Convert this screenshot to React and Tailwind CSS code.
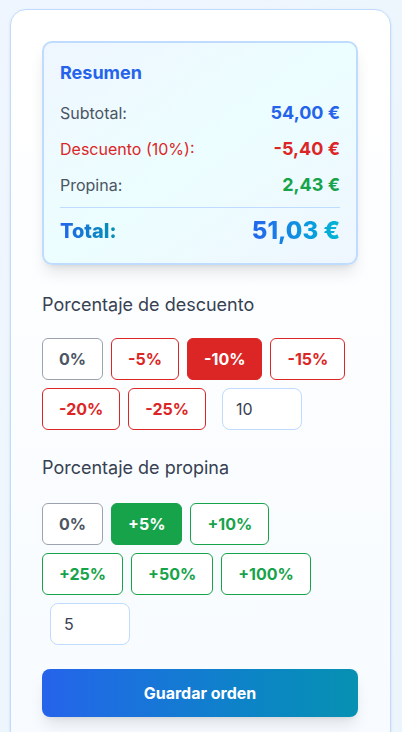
import React, { useState } from 'react';

const descuentos = [0, 5, 10, 15, 20, 25];
const propinas = [0, 5, 10, 25, 50, 100];

const fmt = (n) => n.toFixed(2).replace('.', ',') + ' €';

const App = () => {
  const subtotal = 54;
  const [descuento, setDescuento] = useState(10);
  const [propina, setPropina] = useState(5);

  const montoDescuento = (subtotal * descuento) / 100;
  const montoPropina = ((subtotal - montoDescuento) * propina) / 100;
  const total = subtotal - montoDescuento + montoPropina;

  const btnClass = (value, active, tipo) => {
    if (value === 0) {
      return active
        ? 'bg-[#4b5563] border-[#4b5563] text-white'
        : 'border-[#9ca3af] text-[#4b5563] bg-white';
    }
    if (tipo === 'descuento') {
      return active
        ? 'bg-[#dc2626] border-[#dc2626] text-white'
        : 'border-[#dc2626] text-[#dc2626] bg-white';
    }
    return active
      ? 'bg-[#16a34a] border-[#16a34a] text-white'
      : 'border-[#16a34a] text-[#16a34a] bg-white';
  };

  return (
    <div className="min-h-screen bg-gradient-to-br from-[#eff6ff] to-[#ecf5fb] pl-[10px] pt-[9px] font-['Inter',sans-serif]">
      <div className="w-[381px] rounded-2xl border border-[#bfdbfe] bg-gradient-to-b from-white to-[#f7fbff] pl-[31px] pr-[32px] pt-[31px] pb-10 shadow-sm">
        {/* Resumen */}
        <div className="rounded-[10px] border-2 border-[#bfdbfe] bg-gradient-to-br from-[#eff6ff] via-[#ecfeff] to-[#eff6ff] px-4 pt-4 pb-4 shadow-lg">
          <h3 className="text-lg font-bold text-[#2563eb] leading-7">Resumen</h3>
          <div className="mt-3 flex flex-col gap-[8px] text-base leading-7">
            <div className="flex justify-between">
              <span className="text-[#4b5563]">Subtotal:</span>
              <span className="font-bold text-[#2563eb] text-lg">{fmt(subtotal)}</span>
            </div>
            <div className="flex justify-between">
              <span className="text-[#dc2626]">Descuento ({descuento}%):</span>
              <span className="font-bold text-[#dc2626] text-lg">-{fmt(montoDescuento)}</span>
            </div>
            <div className="flex justify-between">
              <span className="text-[#4b5563]">Propina:</span>
              <span className="font-bold text-[#16a34a] text-lg">{fmt(montoPropina)}</span>
            </div>
          </div>
          <div className="mt-[8px] border-t border-[#bfdbfe] pt-[7px] flex items-center justify-between leading-8">
            <span className="text-xl font-extrabold bg-gradient-to-r from-[#2563eb] to-[#0891b2] bg-clip-text text-transparent">
              Total:
            </span>
            <span className="text-2xl font-extrabold bg-gradient-to-r from-[#2563eb] to-[#06b6d4] bg-clip-text text-transparent">
              {fmt(total)}
            </span>
          </div>
        </div>

        {/* Descuento */}
        <div className="mt-[26px]">
          <p className="text-lg text-[#374151] leading-7">Porcentaje de descuento</p>
          <div className="mt-[19px] flex flex-wrap gap-2 pr-2">
            {descuentos.map((d) => (
              <button
                key={d}
                onClick={() => setDescuento(d)}
                className={`h-[42px] rounded-md border px-4 text-base font-bold ${btnClass(d, descuento === d, 'descuento')}`}
              >
                {d === 0 ? '0%' : `-${d}%`}
              </button>
            ))}
            <input
              type="number"
              value={descuento}
              onChange={(e) => setDescuento(Number(e.target.value))}
              className="ml-2 h-[42px] w-[80px] rounded-lg border border-[#bfdbfe] bg-white px-[13px] text-base text-[#374151] outline-none"
            />
          </div>
        </div>

        {/* Propina */}
        <div className="mt-6">
          <p className="text-lg text-[#374151] leading-7">Porcentaje de propina</p>
          <div className="mt-[21px] flex flex-wrap gap-2 pr-2">
            {propinas.map((p) => (
              <button
                key={p}
                onClick={() => setPropina(p)}
                className={`h-[42px] rounded-md border px-4 text-base font-bold ${btnClass(p, propina === p, 'propina')}`}
              >
                {p === 0 ? '0%' : `+${p}%`}
              </button>
            ))}
            <input
              type="number"
              value={propina}
              onChange={(e) => setPropina(Number(e.target.value))}
              className="ml-2 h-[42px] w-[80px] rounded-lg border border-[#bfdbfe] bg-white px-[13px] text-base text-[#374151] outline-none"
            />
          </div>
        </div>

        <button className="mt-6 h-12 w-full rounded-lg bg-gradient-to-r from-[#2563eb] to-[#0891b2] text-base font-bold text-white shadow-lg">
          Guardar orden
        </button>
      </div>
    </div>
  );
};

export default App;
